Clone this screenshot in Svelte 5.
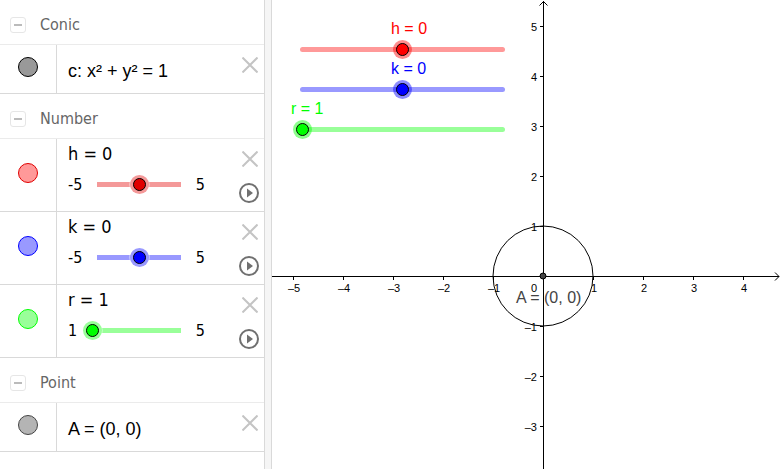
<script lang="ts">
  interface Slider {
    name: string;
    min: number;
    max: number;
    value: number;
    color: string;
    thumb: string;
    soft: string;
  }

  const UNIT = 50; // pixels per graph unit
  const TRACK = 200; // travel of a slider on the graph
  const OX = 271;
  const OY = 276;

  let sliders = $state<Slider[]>([
    { name: "h", min: -5, max: 5, value: 0, color: "#ff0000", thumb: "#e00000", soft: "#f49999" },
    { name: "k", min: -5, max: 5, value: 0, color: "#0000ff", thumb: "#0000ff", soft: "#9999ff" },
    { name: "r", min: 1, max: 5, value: 1, color: "#00ff00", thumb: "#00ff00", soft: "#99ff99" },
  ]);

  let width = $state(508);
  let height = $state(469);

  let cx = $derived(OX + sliders[0].value * UNIT);
  let cy = $derived(OY - sliders[1].value * UNIT);
  let radius = $derived(sliders[2].value * UNIT);

  let xTicks = $derived(ticks(-Math.floor(OX / UNIT), Math.floor((width - 20 - OX) / UNIT)));
  let yTicks = $derived(ticks(-Math.floor((height - 20 - OY) / UNIT), Math.floor(OY / UNIT)));

  function ticks(from: number, to: number): number[] {
    const out: number[] = [];
    for (let n = from; n <= to; n++) if (n !== 0) out.push(n);
    return out;
  }

  function fmt(n: number): string {
    return n < 0 ? `–${-n}` : `${n}`;
  }

  function labelOffset(s: Slider): number {
    return ((s.value - s.min) / (s.max - s.min)) * TRACK - 5;
  }
</script>

{#snippet header(title: string)}
  <header>
    <button class="collapse" aria-label="Collapse {title}"></button>
    <h2>{title}</h2>
  </header>
{/snippet}

{#snippet remove(name: string)}
  <button class="icon remove" aria-label="Delete {name}">
    <svg width="16" height="16" viewBox="0 0 16 16">
      <path d="M0.5 0.5L15.5 15.5M15.5 0.5L0.5 15.5" stroke="#c4c4c4" stroke-width="2" />
    </svg>
  </button>
{/snippet}

<main>
  <aside aria-label="Algebra view">
    {@render header("Conic")}
    <div class="row">
      <div class="marble-cell"><button class="marble conic" aria-label="Show or hide c"></button></div>
      <div class="body"><p class="definition">c: x² + y² = 1</p></div>
      <div class="actions">{@render remove("c")}</div>
    </div>

    {@render header("Number")}
    {#each sliders as s (s.name)}
      <div class="row tall" style="--color: {s.color}; --thumb: {s.thumb}; --soft: {s.soft}">
        <div class="marble-cell">
          <button class="marble number" aria-label="Show or hide {s.name}"></button>
        </div>
        <div class="body">
          <label class="value" for="panel-{s.name}">{s.name} = {s.value}</label>
          <div class="range">
            <span>{s.min}</span>
            <input id="panel-{s.name}" type="range" min={s.min} max={s.max} step="0.1" bind:value={s.value} />
            <span>{s.max}</span>
          </div>
        </div>
        <div class="actions">
          {@render remove(s.name)}
          <button class="icon" aria-label="Animate {s.name}">
            <svg width="20" height="20" viewBox="0 0 20 20">
              <circle cx="10" cy="10" r="9" fill="none" stroke="#707070" stroke-width="2" />
              <path d="M8 5.5L14 10L8 14.5Z" fill="#707070" />
            </svg>
          </button>
        </div>
      </div>
    {/each}

    {@render header("Point")}
    <div class="row">
      <div class="marble-cell"><button class="marble point" aria-label="Show or hide A"></button></div>
      <div class="body"><p class="definition">A = (0, 0)</p></div>
      <div class="actions">{@render remove("A")}</div>
    </div>
  </aside>

  <div class="splitter"></div>

  <section class="graph" aria-label="Graphics view" bind:clientWidth={width} bind:clientHeight={height}>
    <svg class="plot" {width} {height}>
      <g class="axes">
        <path d="M0 {OY + 0.5}H{width - 1}M{width - 5} {OY - 3.5}L{width - 1} {OY + 0.5}L{width - 5} {OY + 4.5}" />
        <path d="M{OX + 0.5} {height}V1M{OX - 3.5} 5.5L{OX + 0.5} 1.5L{OX + 4.5} 5.5" />
        {#each xTicks as n (n)}
          <path d="M{OX + n * UNIT + 0.5} {OY}v4" />
        {/each}
        {#each yTicks as n (n)}
          <path d="M{OX} {OY - n * UNIT + 0.5}h-3" />
        {/each}
      </g>
      <g class="numbers">
        {#each xTicks as n (n)}
          <text x={OX + n * UNIT + 1} y={OY + 16} text-anchor="middle">{fmt(n)}</text>
        {/each}
        {#each yTicks as n (n)}
          <text x={OX - 6} y={OY - n * UNIT + 5} text-anchor="end">{fmt(n)}</text>
        {/each}
        <text x={OX - 6} y={OY + 16} text-anchor="end">0</text>
      </g>
      <circle {cx} {cy} r={radius} fill="none" stroke="#000" />
      <circle cx={OX} cy={OY} r="3" fill="#444" stroke="#000" />
      <text class="point-label" x={OX - 27} y={OY + 27}>A = (0, 0)</text>
    </svg>

    <div class="graph-sliders">
      {#each sliders as s (s.name)}
        <div class="graph-slider" style="--color: {s.color}">
          <label for="graph-{s.name}" style="margin-left: {labelOffset(s)}px">{s.name} = {s.value}</label>
          <input id="graph-{s.name}" type="range" min={s.min} max={s.max} step="0.1" bind:value={s.value} />
        </div>
      {/each}
    </div>
  </section>
</main>

<style>
  :global(body) {
    margin: 0;
    background: #fff;
  }
  main {
    display: flex;
    box-sizing: border-box;
    min-height: 100vh;
    padding: 0 2px 2px 0;
    font-family: "DejaVu Sans Condensed", "DejaVu Sans", sans-serif;
    font-stretch: condensed;
    font-size: 16px;
    color: #000;
  }
  aside {
    flex: 0 0 264px;
    min-width: 0;
  }
  .splitter {
    flex: 0 0 6px;
    background: #f5f5f5;
    border-left: 1px solid #d9d9d9;
    border-right: 1px solid #d9d9d9;
  }
  button {
    box-sizing: border-box;
    margin: 0;
    padding: 0;
    border: 0;
    background: none;
    cursor: pointer;
  }

  header {
    display: flex;
    align-items: center;
    gap: 14px;
    box-sizing: border-box;
    height: 45px;
    padding: 6px 10px 0;
    border-bottom: 1px solid #ebebeb;
  }
  h2 {
    margin: 0;
    font-size: 16px;
    font-weight: normal;
    line-height: 20px;
    color: #666;
  }
  .collapse {
    display: grid;
    place-items: center;
    width: 16px;
    height: 16px;
    border: 1px solid #e6e6e6;
    border-radius: 3px;
  }
  .collapse::before {
    content: "";
    width: 8px;
    height: 2px;
    background: #bbb;
  }

  .row {
    display: flex;
    min-height: 48px;
    border-bottom: 1px solid #d9d9d9;
  }
  .row.tall {
    min-height: 72px;
  }
  .marble-cell {
    flex: 0 0 57px;
    display: flex;
    justify-content: center;
    align-items: flex-start;
    padding-top: 12px;
    box-sizing: border-box;
    border-right: 1px solid #d9d9d9;
  }
  .tall .marble-cell {
    padding-top: 24px;
  }
  .marble {
    width: 20px;
    height: 20px;
    border: 1px solid #000;
    border-radius: 50%;
  }
  .conic {
    background: #999;
  }
  .point {
    background: #b4b4b4;
    border-color: #444;
  }
  .number {
    background: color-mix(in srgb, var(--color) 40%, white);
    border-color: var(--thumb);
  }

  .body {
    flex: 1;
    min-width: 0;
    padding: 0 34px 0 11px;
  }
  .definition {
    margin: 14px 0 0;
    font: 18px/24px "Liberation Sans", Arial, sans-serif;
    white-space: nowrap;
  }
  .value {
    display: block;
    margin-top: 3px;
    font-size: 18px;
    line-height: 24px;
  }
  .range {
    display: flex;
    margin-top: 8px;
    line-height: 21px;
  }

  .actions {
    flex: 0 0 25px;
    display: flex;
    flex-direction: column;
    gap: 16px;
    padding-top: 12px;
  }
  .icon {
    display: block;
    width: 20px;
  }
  .icon svg {
    display: block;
  }
  .remove {
    width: 16px;
    margin-left: 3px;
  }

  input[type="range"] {
    appearance: none;
    display: block;
    flex: 1;
    width: 0;
    min-width: 0;
    height: 21px;
    margin: 0 9px;
    background: none;
  }
  input::-webkit-slider-runnable-track {
    height: 13px;
    background: linear-gradient(var(--soft), var(--soft)) no-repeat center / calc(100% - 12px) 5px;
  }
  input::-webkit-slider-thumb {
    appearance: none;
    box-sizing: border-box;
    width: 13px;
    height: 13px;
    border: 1px solid #000;
    border-radius: 50%;
    background: var(--thumb);
    box-shadow:
      0 0 0 3px var(--soft),
      0 0 0 4px rgb(255 255 255 / 40%);
  }

  .graph {
    position: relative;
    flex: 1;
    min-width: 0;
    font-family: "Liberation Sans", Arial, sans-serif;
    font-stretch: normal;
  }
  .plot {
    position: absolute;
    inset: 0;
  }
  .axes {
    fill: none;
    stroke: #000;
  }
  .numbers {
    font-size: 11px;
    fill: #000;
  }
  .point-label {
    font-size: 16px;
    fill: #444;
  }

  /* sliders float over the plot */
  .graph-sliders {
    position: absolute;
    top: 20px;
    left: 24px;
    width: 213px;
  }
  .graph-slider {
    position: relative;
    display: flex;
    flex-direction: column;
    gap: 2px;
  }
  .graph-slider::before {
    content: "";
    position: absolute;
    right: 4px;
    bottom: 8px;
    left: 4px;
    height: 5px;
    border-radius: 3px;
    background: color-mix(in srgb, var(--color) 40%, transparent);
  }
  .graph-slider label {
    color: var(--color);
    line-height: 17px;
    white-space: nowrap;
  }
  .graph-slider input[type="range"] {
    position: relative;
    flex: none;
    width: 100%;
    margin: 0;
  }
  .graph-slider input::-webkit-slider-runnable-track {
    background: none;
  }
  .graph-slider input::-webkit-slider-thumb {
    background: var(--color);
    box-shadow: 0 0 0 3px color-mix(in srgb, var(--color) 45%, transparent);
  }
</style>
